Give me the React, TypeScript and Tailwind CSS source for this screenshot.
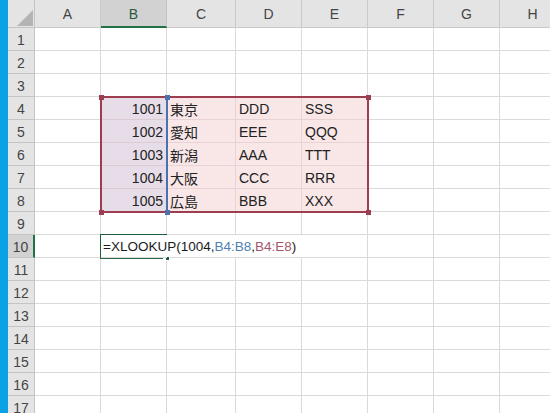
const COLS = ["A", "B", "C", "D", "E", "F", "G", "H"];
const GRID = "grid grid-cols-[27px_66px_66px_69px_66px_66px_66px_66px_66px]";

const DATA: Record<number, string[]> = {
  4: ["1001", "東京", "DDD", "SSS"],
  5: ["1002", "愛知", "EEE", "QQQ"],
  6: ["1003", "新潟", "AAA", "TTT"],
  7: ["1004", "大阪", "CCC", "RRR"],
  8: ["1005", "広島", "BBB", "XXX"],
};

function Cell({ row, col }: { row: number; col: number }) {
  const data = DATA[row];
  const inRange = !!data && col >= 1 && col <= 4;
  const editRow = row === 10 && col >= 1 && col <= 3;

  let cls = "relative flex h-[23px] items-center border-b text-[14px] text-[#222] ";
  cls += editRow ? "border-r-0 " : "border-r ";
  if (inRange) {
    cls += col === 1 ? "bg-[#e7dde8] border-[#dccbd3] " : "bg-[#f9e7e8] border-[#e8d2d5] ";
  } else {
    cls += "bg-white border-[#dadada] ";
  }

  if (inRange) {
    const text = data[col - 1];
    if (col === 1) {
      return (
        <div className={cls + "justify-end pr-[3px] pt-[2px]"}>
          <span>{text}</span>
        </div>
      );
    }
    return (
      <div className={cls + "pl-[3px] pt-[2px]"}>
        <span className={col === 2 ? "font-['Noto_Sans_CJK_JP',sans-serif] text-[14px]" : ""}>{text}</span>
      </div>
    );
  }

  if (row === 10 && col === 1) {
    return (
      <div className={cls + "z-10 overflow-visible pl-[2px] pt-[2px]"}>
        <span className="whitespace-nowrap text-[13.5px] text-[#1a1a1a]">
          =XLOOKUP(1004,<span className="text-[#4f7fb3]">B4:B8</span>,
          <span className="text-[#a5566a]">B4:E8</span>)
        </span>
        <span className="ml-[1px] inline-block h-[17px] w-[1px] bg-black" />
      </div>
    );
  }

  return <div className={cls} />;
}

export default function App() {
  const rows = Array.from({ length: 17 }, (_, i) => i + 1);

  return (
    <div className="flex h-[413px] w-[550px] overflow-hidden bg-white font-['Liberation_Sans','Noto_Sans_CJK_JP',sans-serif]">
      <div className="w-[8px] shrink-0 bg-[#0aa2e4]" />

      <div className="relative flex-1 overflow-hidden">
        {/* column headers */}
        <div className={GRID + " h-[28px]"}>
          <div className="relative border-r border-b border-[#c4c4c4] bg-[#e4e4e4]">
            <svg className="absolute left-[9px] top-[10px]" width="16" height="16" viewBox="0 0 16 16">
              <polygon points="16,0 16,16 0,16" fill="#b4b4b4" />
            </svg>
          </div>
          {COLS.map((c) => (
            <div
              key={c}
              className={
                c === "B"
                  ? "flex items-center justify-center border-r border-b-2 border-r-[#c4c4c4] border-b-[#217346] bg-[#d2d2d2] pt-[3px] text-[14px] text-[#2a5a3e]"
                  : "flex items-center justify-center border-r border-b border-[#c9c9c9] bg-[#e4e4e4] pt-[2px] text-[14px] text-[#444]"
              }
            >
              {c}
            </div>
          ))}
        </div>

        {/* rows */}
        {rows.map((r) => (
          <div key={r} className={GRID}>
            <div
              className={
                r === 10
                  ? "flex h-[23px] items-center justify-center border-r-2 border-b border-r-[#217346] border-b-[#c4c4c4] bg-[#d2d2d2] pt-[2px] text-[14px] text-[#444]"
                  : "flex h-[23px] items-center justify-center border-r border-b border-[#c4c4c4] bg-[#e4e4e4] pt-[2px] text-[14px] text-[#444]"
              }
            >
              {r}
            </div>
            {COLS.map((c, i) => (
              <Cell key={c} row={r} col={i} />
            ))}
          </div>
        ))}

        {/* range B4:E8 */}
        <div className="pointer-events-none absolute left-[92px] top-[96px] h-[117px] w-[269px] border-2 border-[#9c3d50]" />
        <div className="absolute left-[158px] top-[96px] h-[117px] w-[2px] bg-[#4a72ae]" />
        <div className="absolute left-[91px] top-[95px] h-[5px] w-[5px] bg-[#9c3d50]" />
        <div className="absolute left-[358px] top-[95px] h-[5px] w-[5px] bg-[#9c3d50]" />
        <div className="absolute left-[91px] top-[210px] h-[5px] w-[5px] bg-[#9c3d50]" />
        <div className="absolute left-[358px] top-[210px] h-[5px] w-[5px] bg-[#9c3d50]" />
        <div className="absolute left-[157px] top-[95px] h-[5px] w-[5px] bg-[#4a72ae]" />
        <div className="absolute left-[157px] top-[210px] h-[5px] w-[5px] bg-[#4a72ae]" />

        {/* active cell B10 */}
        <div className="absolute left-[92px] top-[234px] h-[2px] w-[67px] bg-[#1f5e3c]" />
        <div className="absolute left-[92px] top-[234px] h-[25px] w-[2px] bg-[#1f5e3c]" />
        <div className="absolute left-[92px] top-[257px] h-[2px] w-[63px] bg-[#2f6a4b]" />
        <div className="absolute left-[157px] top-[256px] h-[5px] w-[5px] border border-white bg-[#1f5e3c]" />
      </div>
    </div>
  );
}
